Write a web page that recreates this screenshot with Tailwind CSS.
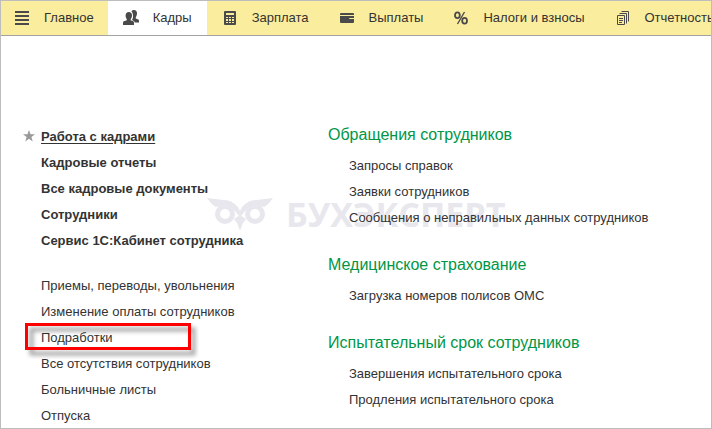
<!DOCTYPE html>
<html lang="ru">
<head>
  <meta charset="UTF-8">
  <meta name="viewport" content="width=device-width, initial-scale=1.0">
  <title>Кадры</title>
  <script src="https://cdn.jsdelivr.net/npm/@tailwindcss/browser@4"></script>
</head>
<body class="bg-white font-['Liberation_Sans',Arial,sans-serif] text-[13px] text-[#333333]">
  <div class="relative flex min-h-screen flex-col overflow-hidden border border-[#bdbdbd]">

    <!-- Панель разделов -->
    <nav class="flex h-[35px] overflow-hidden border-b border-[#a3a3a3] bg-[#fbed9e] whitespace-nowrap">
      <a href="#" class="flex shrink-0 items-center gap-[14px] pr-[14px] pl-[13px]">
        <svg class="size-4" viewBox="0 0 16 16" fill="#4a4a4a"><path d="M1 1h14v2H1zM1 5h14v2H1zM1 9h14v2H1zM1 13h14v2H1z"/></svg>
        Главное
      </a>
      <a href="#" class="flex shrink-0 items-center gap-[14px] bg-white px-[15px]">
        <svg class="size-4" viewBox="0 0 16 16" fill="#4a4a4a">
          <path d="M8.500 1.500C9 .3 10 0 11 0c2 0 3 1.500 3 3.500 0 1.600-.6 2.800-1.200 3.500v1.500l2.500 1c.5.300.7.800.7 1.500v1.500h-4.200c-.3-1-1-1.700-2.300-2.200l-.5-.3c.6-1 1-2 1-3.500 0-2.500-.5-4-1.500-5z"/>
          <path d="M5.800 2C7.800 2 9 3.500 9 5.500c0 1.700-.6 2.800-1.300 3.500v1.300l2.500 1c.6.300.8.700.8 1.500V15H0v-2.200c0-.8.300-1.200.9-1.500l2.900-1V9C3.100 8.300 2.600 7.200 2.600 5.500 2.600 3.500 3.800 2 5.800 2z"/>
        </svg>
        Кадры
      </a>
      <a href="#" class="flex shrink-0 items-center gap-[14px] px-[15px]">
        <svg class="size-4" viewBox="0 0 16 16" fill="#4a4a4a" fill-rule="evenodd"><path d="M3 1h10q1 0 1 1v12q0 1-1 1H3q-1 0-1-1V2q0-1 1-1zM4 3v2h8V3zM4 7v1h2V7zM7 7v1h2V7zM10 7v1h2V7zM4 9v2h2V9zM7 9v2h2V9zM10 9v2h2V9zM4 12v1h2v-1zM7 12v1h2v-1zM10 12v1h2v-1z"/></svg>
        Зарплата
      </a>
      <a href="#" class="flex shrink-0 items-center gap-[14px] px-[15px]">
        <svg class="size-4" viewBox="0 0 16 16" fill="#4a4a4a"><path d="M2 3h12q1 0 1 1v1H1V4q0-1 1-1zM1 6h14v2h-4q-1 0-1 1h5v3q0 1-1 1H2q-1 0-1-1z"/></svg>
        Выплаты
      </a>
      <a href="#" class="flex shrink-0 items-center gap-[14px] px-[15px]">
        <svg class="size-4" viewBox="0 0 16 16" fill="none" stroke="#4a4a4a" stroke-width="1.800"><ellipse cx="4.400" cy="5.200" rx="2.400" ry="2.900"/><ellipse cx="11.600" cy="10.800" rx="2.400" ry="2.900"/><path d="M11.500 2 4.500 14" stroke-width="1.400"/></svg>
        Налоги и взносы
      </a>
      <a href="#" class="flex shrink-0 items-center gap-[14px] px-[15px]">
        <svg class="size-4" viewBox="0 0 16 16" fill="none" stroke="#4a4a4a"><path d="M2.500 5.500h7v9h-7zM4 8.500h4M4 10.500h4M4 12.500h3M4.500 3.500h7v10M6.500 1.500h7v10"/></svg>
        Отчетность
      </a>
    </nav>

    <!-- Водяной знак -->
    <div class="absolute top-[195px] left-[206px] flex items-center gap-[13px] text-[#e8e7ed]" aria-hidden="true">
      <svg class="h-[34px] w-[66px]" viewBox="0 0 66 34" fill="currentColor">
        <g fill="none" stroke="currentColor" stroke-width="5">
          <circle cx="18" cy="17" r="7.500"/>
          <circle cx="48" cy="17" r="7.500"/>
        </g>
        <path d="M0 1c5 1 11 1 17 2 7 0 13 4 16 11 3-7 9-11 16-11 6-1 12-1 17-2-3 4-5 7-9 9l-9-2-8 4-7 8-7-8-8-4-9 2C5 8 3 5 0 1zM27 22l6-4 6 4-3 4c-1 3-2 5-3 8-1-3-2-5-3-8z"/>
      </svg>
      <span class="font-['Open_Sans',sans-serif] text-[34px] leading-9 font-bold">БУХЭКСПЕРТ</span>
    </div>

    <!-- Команды раздела -->
    <main class="relative -mb-1 flex pt-[86px] pl-10 leading-[26px] whitespace-nowrap">
      <div class="w-[287px] shrink-0 pt-0.5">
        <ul class="font-bold">
          <li class="relative">
            <svg class="absolute top-[6px] -left-[18px] size-3" viewBox="0 0 12 12" fill="#999999"><path d="M6 0l1.500 4.200H12L8.400 7 9.700 11.500 6 8.800 2.300 11.500 3.600 7 0 4.200h4.500z"/></svg>
            <a href="#" class="underline underline-offset-2">Работа с кадрами</a>
          </li>
          <li><a href="#">Кадровые отчеты</a></li>
          <li><a href="#">Все кадровые документы</a></li>
          <li><a href="#">Сотрудники</a></li>
          <li><a href="#">Сервис 1С:Кабинет сотрудника</a></li>
        </ul>
        <ul class="mt-[19px]">
          <li><a href="#">Приемы, переводы, увольнения</a></li>
          <li><a href="#">Изменение оплаты сотрудников</a></li>
          <li class="relative">
            <a href="#">Подработки</a>
            <svg class="absolute -top-0.5 -left-4 h-9 w-[174px]" viewBox="0 0 174 36" fill="none" aria-hidden="true">
              <rect x="6.500" y="6.500" width="162" height="24" stroke="#000000" stroke-opacity="0.350" stroke-width="4" class="blur-[2px]"/>
              <rect x="1.500" y="1.500" width="163" height="24" stroke="#fe0000" stroke-width="3"/>
            </svg>
          </li>
          <li><a href="#">Все отсутствия сотрудников</a></li>
          <li><a href="#">Больничные листы</a></li>
          <li><a href="#">Отпуска</a></li>
        </ul>
      </div>

      <div class="flex flex-col gap-[21px]">
        <section>
          <h2 class="mb-[5px] text-base leading-[26px] text-[#009646]">Обращения сотрудников</h2>
          <ul class="pl-[21px]">
            <li><a href="#">Запросы справок</a></li>
            <li><a href="#">Заявки сотрудников</a></li>
            <li><a href="#">Сообщения о неправильных данных сотрудников</a></li>
          </ul>
        </section>
        <section>
          <h2 class="mb-[5px] text-base leading-[26px] text-[#009646]">Медицинское страхование</h2>
          <ul class="pl-[21px]">
            <li><a href="#">Загрузка номеров полисов ОМС</a></li>
          </ul>
        </section>
        <section>
          <h2 class="mb-[5px] text-base leading-[26px] text-[#009646]">Испытательный срок сотрудников</h2>
          <ul class="pl-[21px]">
            <li><a href="#">Завершения испытательного срока</a></li>
            <li><a href="#">Продления испытательного срока</a></li>
          </ul>
        </section>
      </div>
    </main>
  </div>
</body>
</html>
